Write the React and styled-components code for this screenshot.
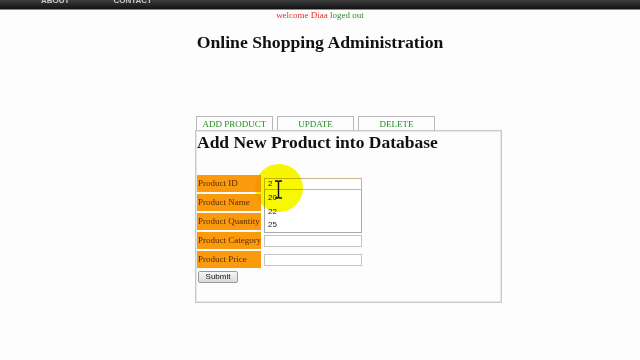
import React from "react";
import styled, { createGlobalStyle } from "styled-components";

const GlobalStyle = createGlobalStyle`
  html, body {
    margin: 0;
    padding: 0;
    background: #fcfdfc;
    font-family: "Liberation Serif", "Times New Roman", serif;
  }
`;

const Page = styled.div`
  width: 640px;
  height: 360px;
  overflow: hidden;
  position: relative;
  isolation: isolate;
  background: #fcfdfc;
`;

const Nav = styled.div`
  height: 9px;
  overflow: hidden;
  background: linear-gradient(#3c3c3c, #121212);
  border-bottom: 1px solid #8a8a8a;
  display: flex;
  gap: 44px;
  padding-left: 41px;
`;

const NavItem = styled.span`
  margin-top: -4px;
  font-family: "Liberation Sans", Arial, sans-serif;
  font-size: 8px;
  font-weight: bold;
  line-height: 10px;
  color: #c8c8c8;
`;

const Welcome = styled.div`
  text-align: center;
  font-size: 9px;
  line-height: 10px;
`;

const Name = styled.span`
  color: #e03030;
`;

const Logout = styled.span`
  color: #2e8b2e;
`;

const Title = styled.h1`
  margin: 11px 0 0;
  text-align: center;
  font-size: 17.7px;
  line-height: 22px;
  color: #111;
`;

const Section = styled.div`
  margin: 63px 0 0 195px;
  width: 307px;
`;

const Tabs = styled.div`
  display: flex;
  gap: 4px;
  padding-left: 1px;
`;

const Tab = styled.div`
  width: 75px;
  height: 13px;
  border: 1px solid #b8b8b8;
  border-bottom: none;
  text-align: center;
  font-size: 9px;
  line-height: 14px;
  color: #288a28;
`;

const Panel = styled.div`
  height: 169px;
  border: 1px solid #c9c9c9;
  box-shadow: inset 0 0 0 1px #e6e6e6;
  background: #fcfdfc;
  padding: 1px;
  position: relative;
`;

const Heading = styled.h2`
  margin: 0;
  font-size: 17.5px;
  line-height: 20px;
  color: #111;
`;

const Form = styled.div`
  margin-top: 23px;
  display: grid;
  grid-template-columns: 64px 100px;
  column-gap: 3px;
  row-gap: 2px;
  width: fit-content;
`;

const Label = styled.div`
  height: 17px;
  background: #fb9a0c;
  color: #5a2a00;
  font-size: 9px;
  line-height: 17px;
  padding-left: 1px;
  white-space: nowrap;
  overflow: hidden;
`;

const Cell = styled.div`
  display: flex;
  align-items: center;
  position: relative;
`;

const Input = styled.div`
  box-sizing: border-box;
  width: 98px;
  height: 12px;
  border: 1px solid ${(p) => (p.$focused ? "#c9b48f" : "#c4c4c4")};
  background: #fff;
  font-family: "Liberation Sans", Arial, sans-serif;
  font-size: 8px;
  line-height: 10px;
  padding-left: 3px;
  color: #222;
`;

const Dropdown = styled.div`
  position: absolute;
  left: 0;
  top: 15px;
  width: 98px;
  box-sizing: border-box;
  border: 1px solid #aaa;
  border-top: none;
  background: #fff;
  padding: 1px 0 0;
  z-index: 2;
`;

const Option = styled.div`
  font-family: "Liberation Sans", Arial, sans-serif;
  font-size: 8px;
  line-height: 13.5px;
  padding-left: 3px;
  color: #222;
`;

const Submit = styled.button`
  display: block;
  margin: 3px 0 0 1px;
  width: 40px;
  height: 12px;
  padding: 0;
  border: 1px solid #9a9a9a;
  border-radius: 2px;
  background: linear-gradient(#f6f6f6, #d9d9d9);
  font-family: "Liberation Sans", Arial, sans-serif;
  font-size: 8px;
  line-height: 10px;
  color: #111;
`;

const Highlight = styled.div`
  position: absolute;
  left: 255px;
  top: 164px;
  width: 48px;
  height: 48px;
  border-radius: 50%;
  background: #f8f800;
  mix-blend-mode: multiply;
  z-index: 3;
  pointer-events: none;
`;

const Caret = styled.svg`
  position: absolute;
  left: 274px;
  top: 180px;
  z-index: 4;
`;

const fields = ["Product ID", "Product Name", "Product Quantity", "Product Category", "Product Price"];

export default function App() {
  return (
    <Page>
      <GlobalStyle />
      <Nav>
        <NavItem>ABOUT</NavItem>
        <NavItem>CONTACT</NavItem>
      </Nav>
      <Welcome>
        <Name>welcome Diaa</Name> <Logout>loged out</Logout>
      </Welcome>
      <Title>Online Shopping Administration</Title>
      <Section>
        <Tabs>
          <Tab>ADD PRODUCT</Tab>
          <Tab>UPDATE</Tab>
          <Tab>DELETE</Tab>
        </Tabs>
        <Panel>
          <Heading>Add New Product into Database</Heading>
          <Form>
            {fields.map((f, i) => (
              <React.Fragment key={f}>
                <Label>{f}</Label>
                <Cell>
                  <Input $focused={i === 0}>{i === 0 ? "2" : ""}</Input>
                  {i === 0 && (
                    <Dropdown>
                      <Option>20</Option>
                      <Option>22</Option>
                      <Option>25</Option>
                    </Dropdown>
                  )}
                </Cell>
              </React.Fragment>
            ))}
          </Form>
          <Submit>Submit</Submit>
        </Panel>
      </Section>
      <Highlight />
      <Caret width="9" height="19" viewBox="0 0 9 19">
        <path d="M1 1 H3.5 L4.5 2 L5.5 1 H8 M4.5 2 V17 M1 18 H3.5 L4.5 17 L5.5 18 H8" stroke="#111" strokeWidth="1.4" fill="none" />
      </Caret>
    </Page>
  );
}
